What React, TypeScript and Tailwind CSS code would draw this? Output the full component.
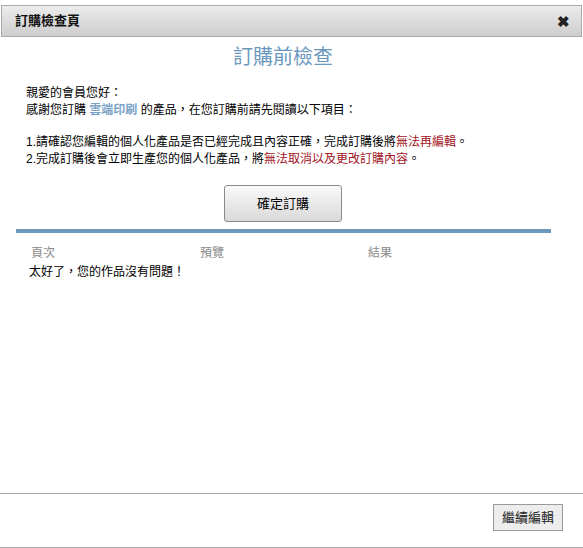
import React from "react";

const font = { fontFamily: '"Liberation Sans", "Noto Sans CJK TC", sans-serif' };

export default function App() {
  return (
    <div className="w-[583px] h-[548px] bg-white relative overflow-hidden text-[12px] text-black" style={font}>
      <div className="h-[5px] bg-white"></div>
      <div className="mx-[1px] h-[32px] border border-[#a9a9a9] bg-gradient-to-b from-[#ececec] to-[#cdcdcd] flex items-center justify-between pl-[13px] pr-[11px]">
        <span className="font-bold text-[13px] text-[#111]">訂購檢查頁</span>
        <span className="font-bold text-[15px] text-[#222] leading-none">✖</span>
      </div>
      <div className="h-[456px] flex flex-col">
        <div className="text-center text-[20px] text-[#6a98bd] mt-[7px] leading-[26px] pr-[17px]">訂購前檢查</div>
        <div className="pl-[26px] mt-[15px] leading-[16.5px]">
          <div>親愛的會員您好：</div>
          <div>
            感謝您訂購 <span className="font-bold text-[#7aa3c8]">雲端印刷</span> 的產品，在您訂購前請先閱讀以下項目：
          </div>
          <div className="h-[16px]"></div>
          <div>
            1.請確認您編輯的個人化產品是否已經完成且內容正確，完成訂購後將<span className="text-[#a3141e]">無法再編輯</span>。
          </div>
          <div>
            2.完成訂購後會立即生產您的個人化產品，將<span className="text-[#a3141e]">無法取消以及更改訂購內容</span>。
          </div>
        </div>
        <div className="flex justify-center mt-[18px] pr-[17px]">
          <button className="w-[118px] h-[37px] rounded-[3px] border border-[#8a8a8a] bg-gradient-to-b from-[#fafafa] to-[#d9d9d9] text-[13px] text-black">
            確定訂購
          </button>
        </div>
        <div className="ml-[16px] mr-[32px] mt-[7px] h-[4px] bg-[#6c98bb]"></div>
        <div className="grid grid-cols-[169px_168px_1fr] pl-[31px] mt-[12px] text-[#8a8a8a] leading-[16px]">
          <span>頁次</span>
          <span>預覽</span>
          <span>結果</span>
        </div>
        <div className="pl-[29px] mt-[3px] leading-[16px]">太好了，您的作品沒有問題！</div>
      </div>
      <div className="h-[1px] bg-[#a9a9a9]"></div>
      <div className="flex justify-end pr-[20px] pt-[10px]">
        <button className="w-[70px] h-[27px] border border-[#9a9a9a] bg-[#ededed] text-[13px] text-[#222]">繼續編輯</button>
      </div>
      <div className="absolute left-0 right-0 bottom-0 h-[1px] bg-[#a9a9a9]"></div>
    </div>
  );
}
